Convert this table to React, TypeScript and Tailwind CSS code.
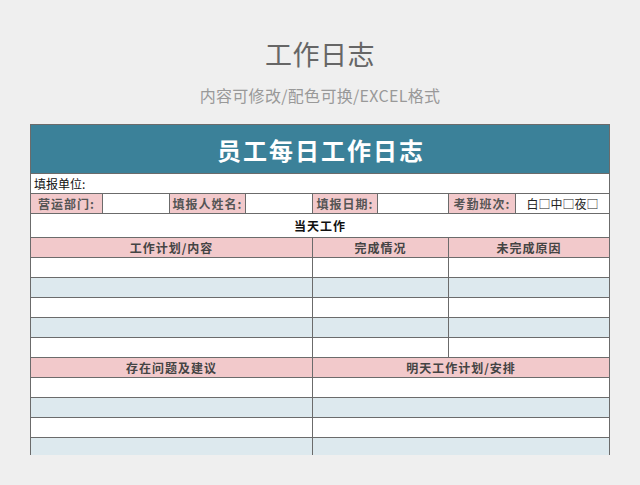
const FONT = "font-['Noto_Sans_CJK_SC','Noto_Sans',sans-serif]";

const infoCells = [
  { label: '营运部门:' },
  { label: '填报人姓名:' },
  { label: '填报日期:' },
];

function Row({ children, className = '' }: { children?: React.ReactNode; className?: string }) {
  return <div className={`h-[19px] ${className}`}>{children}</div>;
}

export default function App() {
  const todayRows = [0, 1, 2, 3, 4];
  const bottomRows = [0, 1, 2, 3];

  return (
    <div className={`${FONT} w-[640px] h-[485px] bg-[#efefef] overflow-hidden`}>
      <div className="pt-[34px] flex flex-col items-center">
        <h1 className="text-[27px] leading-[40px] text-[#666] tracking-[0.5px]">工作日志</h1>
        <p className="mt-[10px] text-[16px] leading-[22px] text-[#999] tracking-[0.3px]">内容可修改/配色可换/EXCEL格式</p>
      </div>

      {/* sheet, cut off at the bottom like the original image */}
      <div className="mt-[18px] ml-[30px] w-[580px] h-[331px] overflow-hidden">
        <div className="grid grid-cols-[71px_66px_75px_66px_64px_70px_66px_93px] gap-px bg-[#6b6b6b] border border-[#6b6b6b] text-[12px] leading-[19px]">
          <div className="col-span-8 h-[48px] bg-[#3b8199] flex items-center justify-center">
            <span className="text-white text-[24px] font-bold tracking-[2px] pl-[2px]">员工每日工作日志</span>
          </div>

          <Row className="col-span-8 bg-white text-[#111] pl-[3px]">填报单位:</Row>

          {infoCells.map((c) => (
            <div key={c.label} className="contents">
              <Row className="bg-[#f2c9cb] text-[#555] font-semibold tracking-[1px] text-center">{c.label}</Row>
              <Row className="bg-white" />
            </div>
          ))}
          <Row className="bg-[#f2c9cb] text-[#555] font-semibold tracking-[1px] text-center">考勤班次:</Row>
          <Row className="bg-white text-[#222] text-center">白□中□夜□</Row>

          <div className="col-span-8 h-[23px] bg-white text-[#111] font-bold tracking-[1px] flex items-center justify-center">
            当天工作
          </div>

          <Row className="col-span-4 bg-[#f2c9cb] text-[#444] font-semibold tracking-[1px] text-center">工作计划/内容</Row>
          <Row className="col-span-2 bg-[#f2c9cb] text-[#444] font-semibold tracking-[1px] text-center">完成情况</Row>
          <Row className="col-span-2 bg-[#f2c9cb] text-[#444] font-semibold tracking-[1px] text-center">未完成原因</Row>

          {todayRows.map((i) => {
            const bg = i % 2 === 1 ? 'bg-[#dde9ee]' : 'bg-white';
            return (
              <div key={i} className="contents">
                <Row className={`col-span-4 ${bg}`} />
                <Row className={`col-span-2 ${bg}`} />
                <Row className={`col-span-2 ${bg}`} />
              </div>
            );
          })}

          <Row className="col-span-4 bg-[#f2c9cb] text-[#444] font-semibold tracking-[1px] text-center">存在问题及建议</Row>
          <Row className="col-span-4 bg-[#f2c9cb] text-[#444] font-semibold tracking-[1px] text-center">明天工作计划/安排</Row>

          {bottomRows.map((i) => {
            const bg = i % 2 === 1 ? 'bg-[#dde9ee]' : 'bg-white';
            return (
              <div key={i} className="contents">
                <Row className={`col-span-4 ${bg}`} />
                <Row className={`col-span-4 ${bg}`} />
              </div>
            );
          })}
        </div>
      </div>
    </div>
  );
}
